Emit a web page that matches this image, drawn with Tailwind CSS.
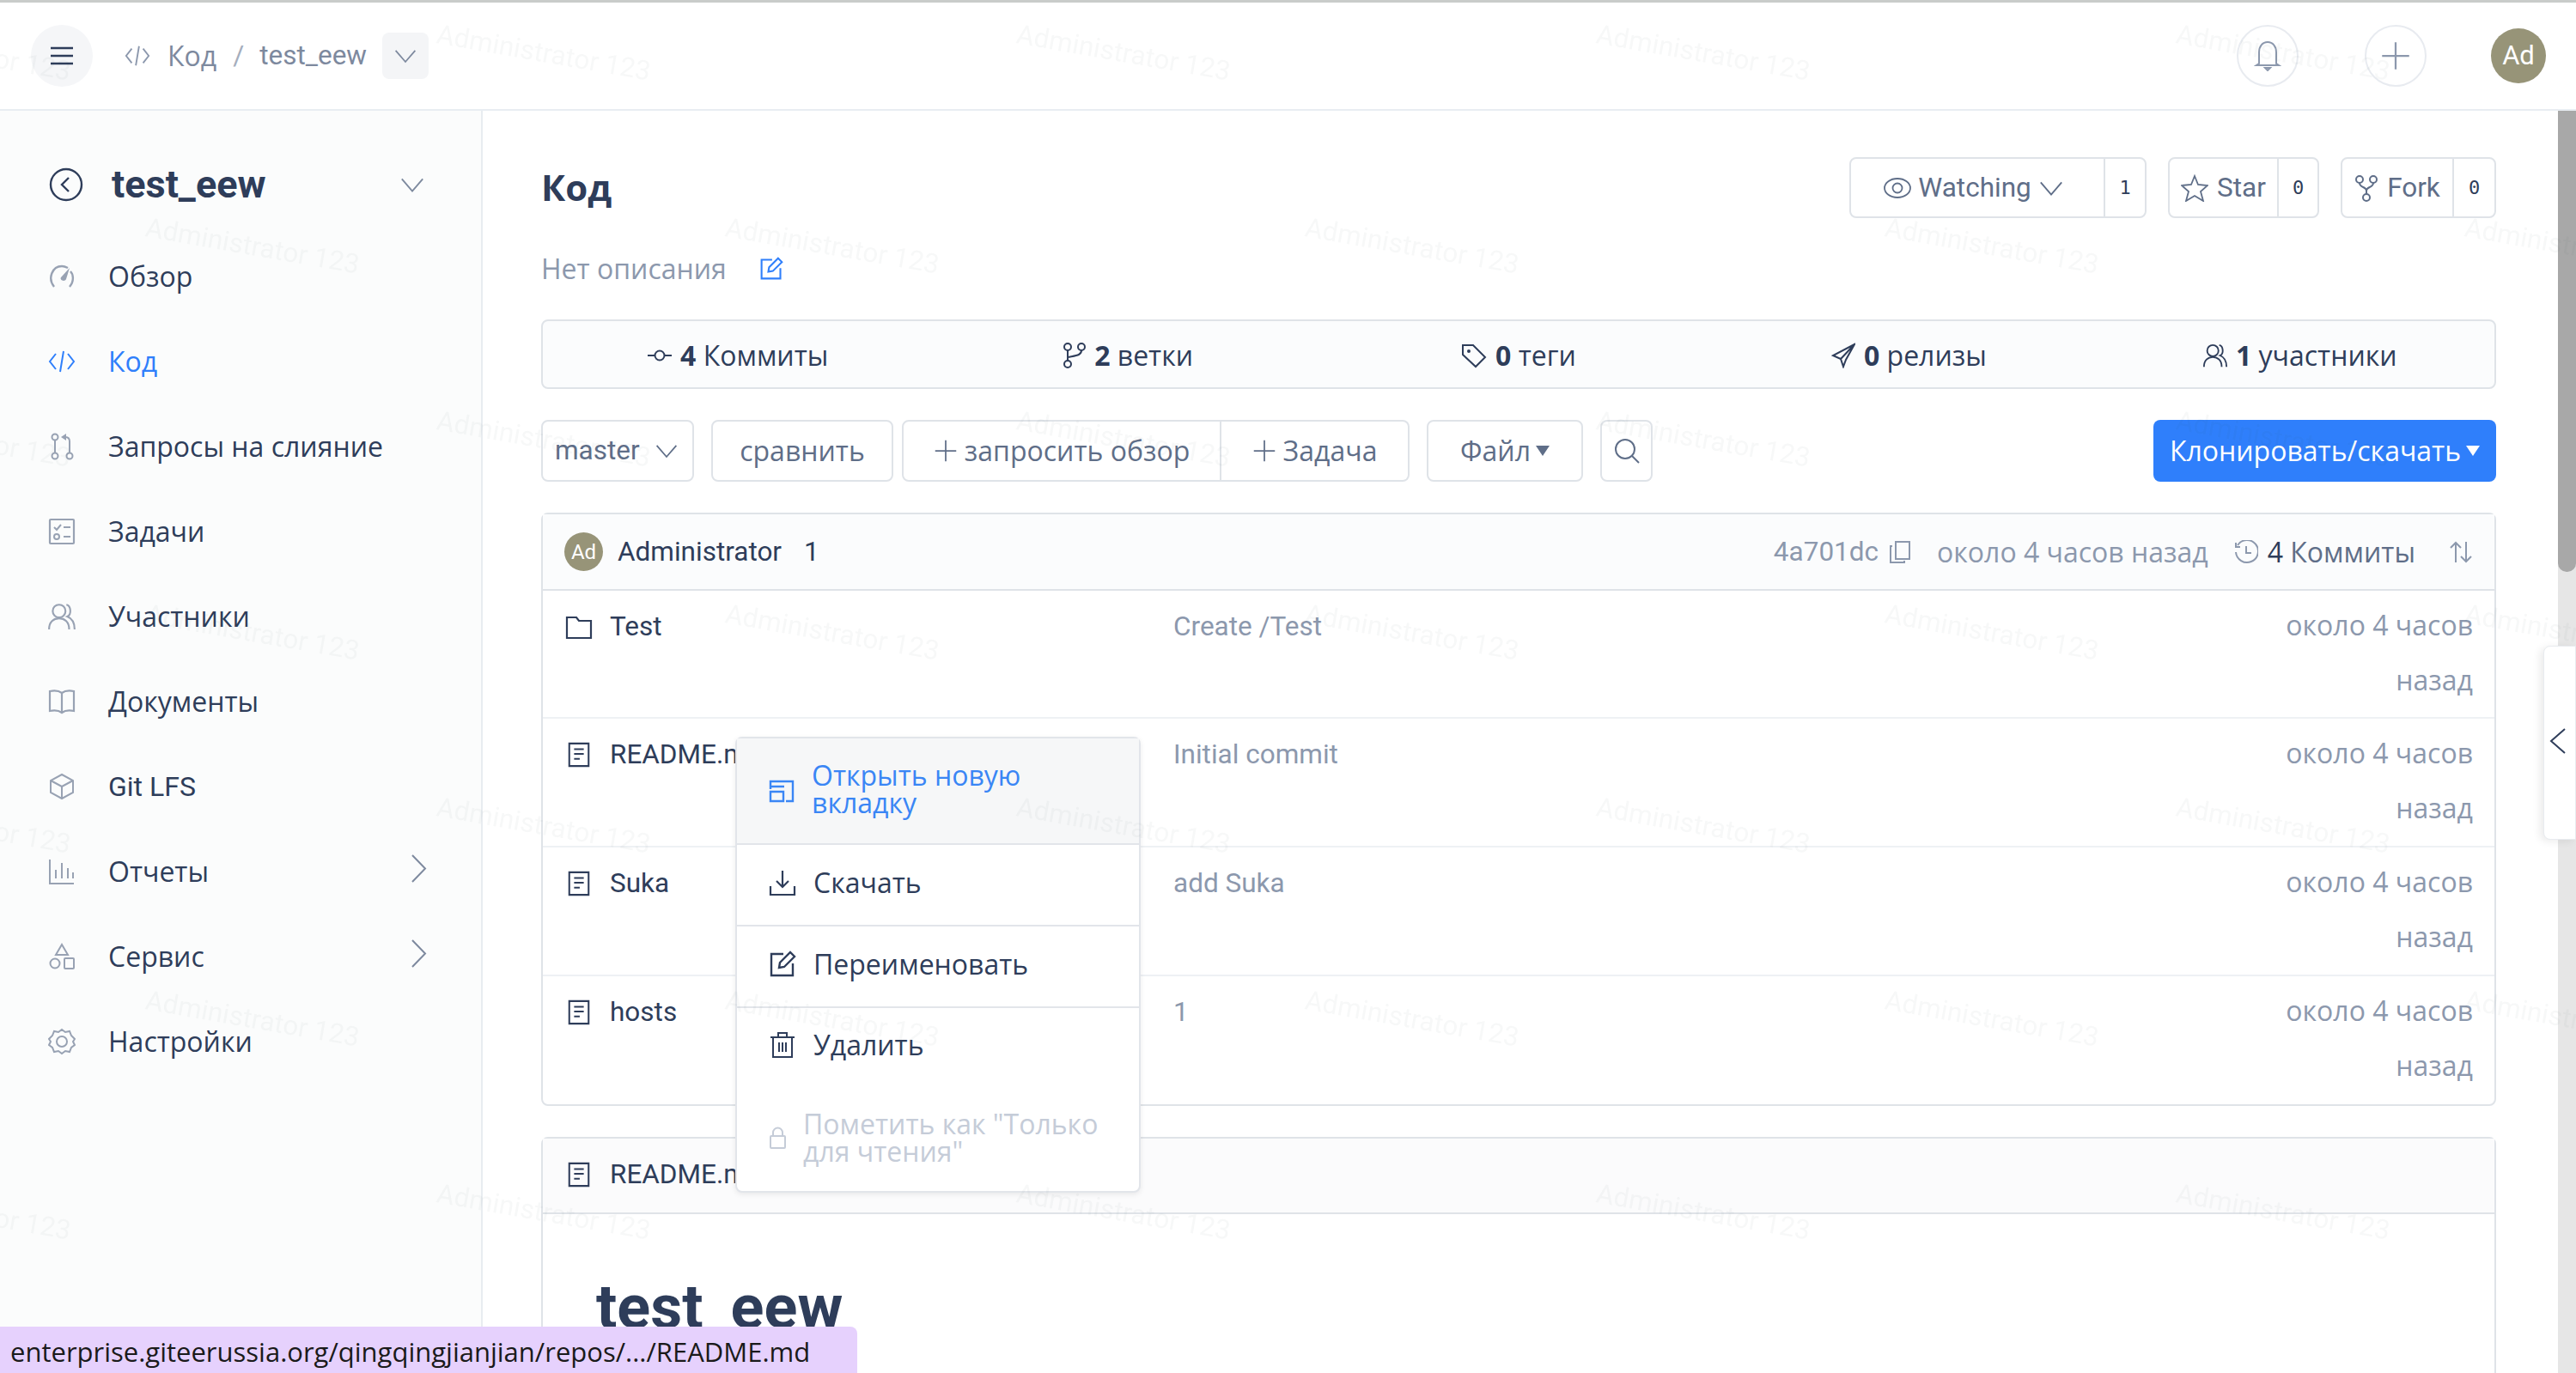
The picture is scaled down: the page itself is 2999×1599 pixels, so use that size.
<!DOCTYPE html>
<html lang="ru">
<head>
  <meta charset="UTF-8">
  <title>test_eew</title>
  <script src="https://cdn.jsdelivr.net/npm/@tailwindcss/browser@4"></script>
</head>
<body class="bg-white">
  <svg class="hidden" xmlns="http://www.w3.org/2000/svg">
    <symbol id="i-code" viewBox="0 0 32 32"><path d="M9 7 2 16l7 9M23 7l7 9-7 9M18 4l-4 24" fill="none" stroke="currentColor" stroke-width="2"/></symbol>
    <symbol id="i-down" viewBox="0 0 32 32"><path d="M3 9l13 15L29 9" fill="none" stroke="currentColor" stroke-width="2"/></symbol>
    <symbol id="i-file" viewBox="0 0 32 32"><path d="M4 2h24v28H4zM10 9h12M10 15h12M10 21h7" fill="none" stroke="currentColor" stroke-width="2.2"/></symbol>
    <symbol id="i-users" viewBox="0 0 32 32"><circle cx="13" cy="10" r="7" fill="none" stroke="currentColor" stroke-width="2"/><path d="M2 30c0-8 5-12 11-12s11 4 11 12M21 3c5 1 6 11 1 13 5 2 8 6 8 14" fill="none" stroke="currentColor" stroke-width="2"/></symbol>
    <symbol id="i-plus" viewBox="0 0 32 32"><path d="M16 2v28M2 16h28" fill="none" stroke="currentColor" stroke-width="2"/></symbol>
    <symbol id="i-edit" viewBox="0 0 32 32"><path d="M17 4H3v25h25V15M12 20l1-6L25 2l5 5-12 12z" fill="none" stroke="currentColor" stroke-width="2.4"/></symbol>
    <symbol id="i-right" viewBox="0 0 18 33"><path d="M1 1l15 15.500L1 32" fill="none" stroke="currentColor" stroke-width="2"/></symbol>
  </svg>

  <div class="relative flex h-screen w-full flex-col overflow-hidden font-['Roboto',sans-serif] text-[31.5px] text-[#2e3d5a]">
    <div class="h-[3px] shrink-0 bg-[#c9ccca]"></div>

    <header class="flex h-[126px] shrink-0 items-center border-b-2 border-[#e8edf2] pl-[36px] pr-[35px]">
      <button class="flex h-[72px] w-[72px] items-center justify-center rounded-full bg-[#f5f6f8]">
        <svg class="h-[22px] w-[26px]" viewBox="0 0 26 22"><path d="M0 2h26M0 11h26M0 20h26" stroke="#2e3d5a" stroke-width="2.4"/></svg>
      </button>
      <svg class="ml-[37px] h-[30px] w-[30px] text-[#8c98ad]"><use href="#i-code"/></svg>
      <span class="ml-[20px] font-['Open_Sans',sans-serif] text-[32px] text-[#7d899e]">Код</span>
      <span class="ml-[19px] text-[#a5aebd]">/</span>
      <span class="ml-[18px] text-[#7d899e]">test_eew</span>
      <span class="ml-[18px] flex h-[54px] w-[54px] items-center justify-center rounded-lg bg-[#f4f5f7] text-[#7d899e]">
        <svg class="h-[28px] w-[28px]"><use href="#i-down"/></svg>
      </span>
      <span class="ml-auto flex h-[72px] w-[72px] items-center justify-center rounded-full border-2 border-[#e8ebf0] text-[#8c98ad]">
        <svg class="h-[36px] w-[32px]" viewBox="0 0 32 36"><path d="M6 27V14C6 7 10 2 16 2s10 5 10 12v13l3 2H3zM13 32h6l-3 3z" fill="none" stroke="currentColor" stroke-width="2"/></svg>
      </span>
      <span class="ml-[77px] flex h-[72px] w-[72px] items-center justify-center rounded-full border-2 border-[#e8ebf0] text-[#8c98ad]">
        <svg class="h-[36px] w-[36px]"><use href="#i-plus"/></svg>
      </span>
      <span class="ml-[75px] flex h-[64px] w-[64px] items-center justify-center rounded-full bg-[#979478] text-[31px] text-white">Ad</span>
    </header>

    <div class="flex min-h-0 flex-1">
      <aside class="w-[562px] shrink-0 border-r-2 border-[#e8ecf0] bg-[#fbfcfc] pt-[66px]">
        <div class="flex h-[40px] items-center pl-[57px] pr-[65px]">
          <svg class="h-[40px] w-[40px]" viewBox="0 0 40 40"><circle cx="20" cy="20" r="18" fill="none" stroke="#2e3d5a" stroke-width="2.4"/><path d="M23 12l-8 8 8 8" fill="none" stroke="#2e3d5a" stroke-width="2.4"/></svg>
          <span class="ml-[33px] text-[45px] font-bold">test_eew</span>
          <svg class="ml-auto h-[30px] w-[30px] text-[#7d899e]"><use href="#i-down"/></svg>
        </div>
        <nav class="mt-[37px] flex flex-col font-['Open_Sans',sans-serif] text-[32px]">
          <a class="flex h-[99px] items-center pl-[56px]">
            <svg class="h-[32px] w-[32px] text-[#98a2b3]" viewBox="0 0 32 32"><path d="M7 28C-1 18 5 4 16 4c3 0 5 1 7 2M25 28c6-7 4-15 1-18" fill="none" stroke="currentColor" stroke-width="2.4"/><path d="M25 6l-4 13c-2 4-8 1-6-2z" fill="currentColor"/></svg>
            <span class="ml-[38px]">Обзор</span>
          </a>
          <a class="flex h-[99px] items-center pl-[56px] text-[#2f7ffb]">
            <svg class="h-[32px] w-[32px]"><use href="#i-code"/></svg>
            <span class="ml-[38px]">Код</span>
          </a>
          <a class="flex h-[99px] items-center pl-[56px]">
            <svg class="h-[32px] w-[32px] text-[#98a2b3]" viewBox="0 0 32 32"><circle cx="8" cy="5" r="3.5" fill="none" stroke="currentColor" stroke-width="2"/><circle cx="8" cy="27" r="3.5" fill="none" stroke="currentColor" stroke-width="2"/><circle cx="25" cy="27" r="3.5" fill="none" stroke="currentColor" stroke-width="2"/><path d="M8 9v14M25 23V10c0-3-2-5-5-5" fill="none" stroke="currentColor" stroke-width="2"/><path d="M15 5l6-4v8z" fill="currentColor"/></svg>
            <span class="ml-[38px]">Запросы на слияние</span>
          </a>
          <a class="flex h-[99px] items-center pl-[56px]">
            <svg class="h-[32px] w-[32px] text-[#98a2b3]" viewBox="0 0 32 32"><rect x="2" y="2" width="28" height="28" rx="1" fill="none" stroke="currentColor" stroke-width="2.2"/><path d="M7 11l3 3 5-6M18 11h8M18 22h8" fill="none" stroke="currentColor" stroke-width="2"/><circle cx="10" cy="22" r="3" fill="none" stroke="currentColor" stroke-width="2"/></svg>
            <span class="ml-[38px]">Задачи</span>
          </a>
          <a class="flex h-[99px] items-center pl-[55px]">
            <svg class="h-[34px] w-[34px] text-[#98a2b3]"><use href="#i-users"/></svg>
            <span class="ml-[37px]">Участники</span>
          </a>
          <a class="flex h-[99px] items-center pl-[56px]">
            <svg class="h-[32px] w-[32px] text-[#98a2b3]" viewBox="0 0 32 32"><path d="M16 6C12 3 7 3 2 4v23c5-1 10-1 14 2 4-3 9-3 14-2V4c-5-1-10-1-14 2zv23" fill="none" stroke="currentColor" stroke-width="2.2"/></svg>
            <span class="ml-[38px]">Документы</span>
          </a>
          <a class="flex h-[99px] items-center pl-[56px]">
            <svg class="h-[32px] w-[32px] text-[#98a2b3]" viewBox="0 0 32 32"><path d="M16 2l13 7v14l-13 7-13-7V9zM3 9l13 7 13-7M16 16v14" fill="none" stroke="currentColor" stroke-width="2"/></svg>
            <span class="ml-[38px] font-['Roboto',sans-serif] text-[32px]">Git LFS</span>
          </a>
          <a class="flex h-[99px] items-center pl-[56px] pr-[63px]">
            <svg class="h-[32px] w-[32px] text-[#98a2b3]" viewBox="0 0 32 32"><path d="M2 2v28h28M9 24V14M16 24V6M23 24V12M29 24v-7" fill="none" stroke="currentColor" stroke-width="2"/></svg>
            <span class="ml-[38px]">Отчеты</span>
            <svg class="ml-auto mb-[6px] h-[33px] w-[18px] text-[#7d899e]"><use href="#i-right"/></svg>
          </a>
          <a class="flex h-[99px] items-center pl-[56px] pr-[63px]">
            <svg class="h-[32px] w-[32px] text-[#98a2b3]" viewBox="0 0 32 32"><path d="M16 2l7 12H9z" fill="none" stroke="currentColor" stroke-width="2"/><circle cx="8" cy="24" r="5.5" fill="none" stroke="currentColor" stroke-width="2"/><rect x="19" y="18" width="11" height="12" rx="1" fill="none" stroke="currentColor" stroke-width="2"/></svg>
            <span class="ml-[38px]">Сервис</span>
            <svg class="ml-auto mb-[6px] h-[33px] w-[18px] text-[#7d899e]"><use href="#i-right"/></svg>
          </a>
          <a class="flex h-[99px] items-center pl-[56px]">
            <svg class="h-[32px] w-[32px] text-[#98a2b3]" viewBox="0 0 32 32"><path d="M16 2l4 3 5-1 2 5 4 4-2 3 2 4-4 3-2 5-5-1-4 3-4-3-5 1-2-5-4-3 2-4-2-3 4-4 2-5 5 1z" fill="none" stroke="currentColor" stroke-width="2"/><circle cx="16" cy="16" r="6" fill="none" stroke="currentColor" stroke-width="2"/></svg>
            <span class="ml-[38px]">Настройки</span>
          </a>
        </nav>
      </aside>

      <main class="min-w-0 flex-1 pl-[68px] pr-[72px] pt-[54px]">
        <div class="flex h-[71px] items-center">
          <h1 class="-mt-[2px] font-['Open_Sans',sans-serif] text-[42px] font-bold">Код</h1>
          <div class="ml-auto flex items-stretch gap-[25px] text-[#5f6e88]">
            <div class="flex h-[71px] w-[346px] items-stretch rounded-lg border-2 border-[#dfe3e8]">
              <span class="flex flex-1 items-center justify-center gap-[8px] pr-[8px]">
                <svg class="h-[32px] w-[32px]" viewBox="0 0 32 32"><ellipse cx="16" cy="16" rx="15" ry="11" fill="none" stroke="currentColor" stroke-width="1.8"/><circle cx="16" cy="16" r="5.5" fill="none" stroke="currentColor" stroke-width="1.8"/></svg>
                Watching
                <svg class="h-[30px] w-[30px]"><use href="#i-down"/></svg>
              </span>
              <span class="flex w-[48px] items-center justify-center border-l-2 border-[#dfe3e8] font-['DejaVu_Sans_Mono',monospace] text-[22px] text-[#2e3d5a]">1</span>
            </div>
            <div class="flex h-[71px] w-[176px] items-stretch rounded-lg border-2 border-[#dfe3e8]">
              <span class="flex flex-1 items-center justify-center gap-[10px]">
                <svg class="h-[32px] w-[32px]" viewBox="0 0 32 32"><path d="M16 2l4 10 11 1-8 7 3 11-10-6-10 6 3-11-8-7 11-1z" fill="none" stroke="currentColor" stroke-width="1.8"/></svg>
                Star
              </span>
              <span class="flex w-[47px] items-center justify-center border-l-2 border-[#dfe3e8] font-['DejaVu_Sans_Mono',monospace] text-[22px] text-[#2e3d5a]">0</span>
            </div>
            <div class="flex h-[71px] w-[181px] items-stretch rounded-lg border-2 border-[#dfe3e8]">
              <span class="flex flex-1 items-center justify-center gap-[10px]">
                <svg class="h-[32px] w-[28px]" viewBox="0 0 28 32"><circle cx="6" cy="6" r="4" fill="none" stroke="currentColor" stroke-width="2"/><circle cx="22" cy="6" r="4" fill="none" stroke="currentColor" stroke-width="2"/><circle cx="14" cy="27" r="4" fill="none" stroke="currentColor" stroke-width="2"/><path d="M6 10c0 6 8 4 8 9v4M22 10c0 6-8 4-8 9" fill="none" stroke="currentColor" stroke-width="2"/></svg>
                Fork
              </span>
              <span class="flex w-[49px] items-center justify-center border-l-2 border-[#dfe3e8] font-['DejaVu_Sans_Mono',monospace] text-[22px] text-[#2e3d5a]">0</span>
            </div>
          </div>
        </div>

        <div class="mt-[36px] flex h-[46px] items-center font-['Open_Sans',sans-serif] text-[32px] text-[#8c98ad]">
          Нет описания
          <svg class="ml-[38px] h-[28px] w-[28px] text-[#2f7ffb]"><use href="#i-edit"/></svg>
        </div>

        <div class="mt-[36px] grid h-[81px] grid-cols-5 items-center rounded-lg border-2 border-[#dfe3e8] bg-[#fbfcfd] pt-[2px] font-['Open_Sans',sans-serif] text-[32px]">
          <span class="flex items-center justify-center gap-[10px]">
            <svg class="h-[14px] w-[28px]" viewBox="0 0 28 14"><circle cx="14" cy="7" r="5.5" fill="none" stroke="currentColor" stroke-width="2"/><path d="M0 7h8M20 7h8" stroke="currentColor" stroke-width="2"/></svg>
            <span><b>4</b> Коммиты</span>
          </span>
          <span class="flex items-center justify-center gap-[10px]">
            <svg class="h-[30px] w-[26px]" viewBox="0 0 26 30"><circle cx="5" cy="5" r="4" fill="none" stroke="currentColor" stroke-width="2"/><circle cx="21" cy="5" r="4" fill="none" stroke="currentColor" stroke-width="2"/><circle cx="5" cy="25" r="4" fill="none" stroke="currentColor" stroke-width="2"/><path d="M5 9v12M21 9c0 6-6 6-16 8" fill="none" stroke="currentColor" stroke-width="2"/></svg>
            <span><b>2</b> ветки</span>
          </span>
          <span class="flex items-center justify-center gap-[10px]">
            <svg class="h-[30px] w-[30px]" viewBox="0 0 30 30"><path d="M2 3h12l14 14-11 11L2 14z" fill="none" stroke="currentColor" stroke-width="2"/><circle cx="9" cy="10" r="2" fill="currentColor"/></svg>
            <span><b>0</b> теги</span>
          </span>
          <span class="flex items-center justify-center gap-[10px]">
            <svg class="h-[30px] w-[28px]" viewBox="0 0 28 30"><path d="M27 2L2 15l9 4 3 9 3-8zM11 19L27 2" fill="none" stroke="currentColor" stroke-width="2"/></svg>
            <span><b>0</b> релизы</span>
          </span>
          <span class="flex items-center justify-center gap-[8px]">
            <svg class="h-[30px] w-[32px]"><use href="#i-users"/></svg>
            <span><b>1</b> участники</span>
          </span>
        </div>

        <div class="mt-[36px] flex h-[72px] items-stretch text-[#5f6e88]">
          <span class="flex w-[178px] items-center justify-between rounded-lg border-2 border-[#dfe3e8] pl-[14px] pr-[16px]">
            master
            <svg class="h-[28px] w-[28px]"><use href="#i-down"/></svg>
          </span>
          <span class="ml-[20px] flex w-[212px] items-center justify-center rounded-lg border-2 border-[#dfe3e8] font-['Open_Sans',sans-serif] text-[32px]">сравнить</span>
          <span class="ml-[10px] flex w-[372px] items-center justify-center gap-[8px] rounded-l-lg border-2 border-[#dfe3e8] font-['Open_Sans',sans-serif] text-[32px]">
            <svg class="h-[28px] w-[28px]"><use href="#i-plus"/></svg>
            запросить обзор
          </span>
          <span class="flex w-[219px] items-center justify-center gap-[8px] rounded-r-lg border-2 border-l-0 border-[#dfe3e8] font-['Open_Sans',sans-serif] text-[32px]">
            <svg class="h-[28px] w-[28px]"><use href="#i-plus"/></svg>
            Задача
          </span>
          <span class="ml-[20px] flex w-[182px] items-center justify-center gap-[6px] rounded-lg border-2 border-[#dfe3e8] font-['Open_Sans',sans-serif] text-[32px]">
            Файл
            <svg class="h-[12px] w-[16px]" viewBox="0 0 16 12"><path d="M0 0h16L8 12z" fill="currentColor"/></svg>
          </span>
          <span class="ml-[20px] flex w-[61px] items-center justify-center rounded-lg border-2 border-[#dfe3e8]">
            <svg class="h-[30px] w-[30px]" viewBox="0 0 30 30"><circle cx="13" cy="13" r="11" fill="none" stroke="currentColor" stroke-width="2"/><path d="M21 21l8 8" stroke="currentColor" stroke-width="2"/></svg>
          </span>
          <span class="ml-auto flex w-[399px] items-center justify-center gap-[6px] rounded-lg bg-[#2f7ffb] font-['Open_Sans',sans-serif] text-[32px] text-white">
            Клонировать/скачать
            <svg class="h-[12px] w-[16px]" viewBox="0 0 16 12"><path d="M0 0h16L8 12z" fill="currentColor"/></svg>
          </span>
        </div>

        <section class="mt-[36px] rounded-lg border-2 border-[#dfe3e8]">
          <div class="flex h-[89px] items-center border-b-2 border-[#dfe3e8] bg-[#fbfcfd] pl-[25px] pr-[25px]">
            <span class="flex h-[45px] w-[45px] items-center justify-center rounded-full bg-[#979478] text-[24px] text-white">Ad</span>
            <span class="ml-[17px]">Administrator</span>
            <span class="ml-[26px]">1</span>
            <span class="ml-auto text-[#8c98ad]">4a701dc</span>
            <svg class="ml-[12px] h-[28px] w-[26px] text-[#8c98ad]" viewBox="0 0 26 28"><path d="M8 2h16v20H8zM4 7H2v19h16v-2" fill="none" stroke="currentColor" stroke-width="2"/></svg>
            <span class="ml-[30px] font-['Open_Sans',sans-serif] text-[32px] text-[#8c98ad]">около 4 часов назад</span>
            <svg class="ml-[30px] h-[28px] w-[28px] text-[#8c98ad]" viewBox="0 0 28 28"><path d="M4 6a13 13 0 1 1-2 8M2 3v5h5M14 7v8h6" fill="none" stroke="currentColor" stroke-width="2"/></svg>
            <span class="ml-[11px] font-['Open_Sans',sans-serif] text-[32px]">4 <span class="text-[#5f6e88]">Коммиты</span></span>
            <svg class="ml-[39px] h-[28px] w-[28px] text-[#8c98ad]" viewBox="0 0 28 28"><path d="M8 26V3M2 9l6-6 6 6M20 2v23M14 19l6 6 6-6" fill="none" stroke="currentColor" stroke-width="2"/></svg>
          </div>
          <div class="flex h-[149px] items-start border-b-2 border-[#eef1f4] pl-[26px] pr-[25px] pt-[10px] leading-[64px]">
            <svg class="mt-[17px] h-[30px] w-[32px]" viewBox="0 0 32 30"><path d="M2 4h11l3 4h14v20H2z" fill="none" stroke="currentColor" stroke-width="2.2"/></svg>
            <span class="ml-[20px] w-[656px]">Test</span>
            <span class="text-[#8c98ad]">Create /Test</span>
            <span class="-mt-[2px] ml-auto w-[240px] text-right font-['Open_Sans',sans-serif] text-[32px] text-[#8c98ad]">около 4 часов назад</span>
          </div>
          <div class="flex h-[150px] items-start border-b-2 border-[#eef1f4] pl-[26px] pr-[25px] pt-[10px] leading-[64px]">
            <svg class="mt-[17px] h-[30px] w-[32px]"><use href="#i-file"/></svg>
            <span class="ml-[20px] w-[656px]">README.md</span>
            <span class="text-[#8c98ad]">Initial commit</span>
            <span class="-mt-[2px] ml-auto w-[240px] text-right font-['Open_Sans',sans-serif] text-[32px] text-[#8c98ad]">около 4 часов назад</span>
          </div>
          <div class="flex h-[150px] items-start border-b-2 border-[#eef1f4] pl-[26px] pr-[25px] pt-[10px] leading-[64px]">
            <svg class="mt-[17px] h-[30px] w-[32px]"><use href="#i-file"/></svg>
            <span class="ml-[20px] w-[656px]">Suka</span>
            <span class="text-[#8c98ad]">add Suka</span>
            <span class="-mt-[2px] ml-auto w-[240px] text-right font-['Open_Sans',sans-serif] text-[32px] text-[#8c98ad]">около 4 часов назад</span>
          </div>
          <div class="flex h-[149px] items-start pl-[26px] pr-[25px] pt-[10px] leading-[64px]">
            <svg class="mt-[17px] h-[30px] w-[32px]"><use href="#i-file"/></svg>
            <span class="ml-[20px] w-[656px]">hosts</span>
            <span class="text-[#8c98ad]">1</span>
            <span class="-mt-[2px] ml-auto w-[240px] text-right font-['Open_Sans',sans-serif] text-[32px] text-[#8c98ad]">около 4 часов назад</span>
          </div>
        </section>

        <section class="mt-[36px] h-[600px] rounded-lg border-2 border-[#dfe3e8]">
          <div class="flex h-[88px] items-center border-b-2 border-[#dfe3e8] bg-[#fbfbfc] pb-[2px] pl-[26px]">
            <svg class="h-[30px] w-[32px]"><use href="#i-file"/></svg>
            <span class="ml-[20px]">README.md</span>
          </div>
          <h2 class="ml-[62px] mt-[67px] text-[72px] font-bold leading-[84px]">test_eew</h2>
        </section>
      </main>

      <div class="w-[21px] shrink-0 bg-[#e6e6e6]">
        <div class="h-[537px] rounded-b-[10px] bg-[#a8a8a8]"></div>
      </div>
    </div>

    <!-- right edge tab -->
    <div class="absolute left-[2961px] top-[752px] flex h-[226px] w-[38px] items-center rounded-l-lg border border-[#e8ebef] bg-white pb-[4px] pl-[6px] shadow-[-4px_2px_10px_rgba(0,0,0,0.08)]">
      <svg class="h-[30px] w-[20px]" viewBox="0 0 20 30"><path d="M18 1L2 15l16 14" fill="none" stroke="#2e3d5a" stroke-width="2"/></svg>
    </div>

    <!-- context menu -->
    <div class="absolute left-[856px] top-[858px] flex h-[531px] w-[472px] flex-col rounded-lg border-2 border-[#e2e5ea] bg-white font-['Open_Sans',sans-serif] text-[32px] shadow-[0_2px_6px_rgba(0,0,0,0.08)]">
      <div class="flex h-[124px] items-center border-b-2 border-[#e2e5ea] bg-[#f6f7f8] pl-[37px] text-[#3a86f5]">
        <svg class="h-[28px] w-[30px]" viewBox="0 0 30 28"><path d="M2 12V3h26v23H20M2 9h16M2 15h15v11H2z" fill="none" stroke="currentColor" stroke-width="2.4"/></svg>
        <span class="-mt-[4px] ml-[20px] w-[300px] leading-[32px]">Открыть новую вкладку</span>
      </div>
      <div class="flex h-[95px] items-center border-b-2 border-[#e2e5ea] pb-[5px] pl-[37px]">
        <svg class="h-[32px] w-[32px]" viewBox="0 0 32 32"><path d="M2 20v10h28V20M16 2v19M9 14l7 7 7-7" fill="none" stroke="currentColor" stroke-width="2.2"/></svg>
        <span class="ml-[20px]">Скачать</span>
      </div>
      <div class="flex h-[95px] items-center border-b-2 border-[#e2e5ea] pb-[5px] pl-[37px]">
        <svg class="h-[32px] w-[32px]"><use href="#i-edit"/></svg>
        <span class="ml-[20px]">Переименовать</span>
      </div>
      <div class="flex h-[90px] items-center pb-[5px] pl-[37px]">
        <svg class="h-[32px] w-[32px]" viewBox="0 0 32 32"><path d="M2 7h28M11 7V2h10v5M5 7v23h22V7M12 13v11M20 13v11M16 13v11" fill="none" stroke="currentColor" stroke-width="2"/></svg>
        <span class="ml-[20px]">Удалить</span>
      </div>
      <div class="flex flex-1 items-center pb-[2px] pl-[38px] text-[#c5ccd8]">
        <svg class="h-[26px] w-[19px]" viewBox="0 0 19 26"><rect x="1" y="11" width="17" height="14" rx="1" fill="none" stroke="currentColor" stroke-width="2"/><path d="M4 11V7a5.500 5.500 0 0 1 11 0v4" fill="none" stroke="currentColor" stroke-width="2"/></svg>
        <span class="ml-[20px] w-[370px] leading-[32px]">Пометить как "Только для чтения"</span>
      </div>
    </div>

    <!-- watermark -->
    <svg class="pointer-events-none absolute inset-0 h-full w-full" xmlns="http://www.w3.org/2000/svg">
      <defs>
        <pattern id="wm" width="675" height="450" patternUnits="userSpaceOnUse">
          <g fill="#27303f" fill-opacity="0.035" font-family="Roboto, sans-serif" font-size="31.5">
            <text x="507" y="50" transform="rotate(10 507 50)">Administrator 123</text>
            <text x="-168" y="50" transform="rotate(10 -168 50)">Administrator 123</text>
            <text x="168" y="275" transform="rotate(10 168 275)">Administrator 123</text>
          </g>
        </pattern>
      </defs>
      <rect width="100%" height="100%" fill="url(#wm)"/>
    </svg>

    <!-- link preview bar -->
    <div class="absolute bottom-0 left-0 flex h-[54px] w-[998px] items-center rounded-tr-lg bg-[#e6d1fd] pl-[12px] pt-[4px] font-['Open_Sans',sans-serif] text-[31px] text-[#1a1a1a]">enterprise.giteerussia.org/qingqingjianjian/repos/.../README.md</div>
  </div>
</body>
</html>
